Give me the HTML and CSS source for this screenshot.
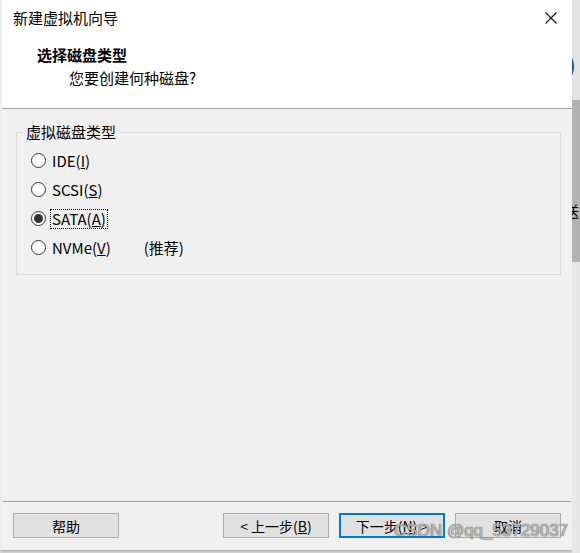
FILE: index.html
```html
<!DOCTYPE html>
<html lang="zh-CN">

<head>
    <meta charset="UTF-8">
    <meta name="viewport" content="width=device-width, initial-scale=1.0">
    <title>新建虚拟机向导</title>
    <link rel="stylesheet" href="styles.css">
</head>

<body>
    <div class="screen">
        <div class="dialog">
            <div class="titlebar">
                <span class="title">新建虚拟机向导</span>
                <svg class="close" width="12" height="12" viewBox="0 0 12 12">
                    <path d="M0.5 0.5 L11.5 11.5 M11.5 0.5 L0.5 11.5" stroke="#111" stroke-width="1.1" fill="none" />
                </svg>
            </div>

            <div class="header">
                <h1>选择磁盘类型</h1>
                <p>您要创建何种磁盘?</p>
            </div>

            <div class="content">
                <fieldset class="group">
                    <legend>虚拟磁盘类型</legend>

                    <div class="option">
                        <span class="radio"></span>
                        <span class="label">IDE(<u>I</u>)</span>
                    </div>
                    <div class="option">
                        <span class="radio"></span>
                        <span class="label">SCSI(<u>S</u>)</span>
                    </div>
                    <div class="option">
                        <span class="radio checked"></span>
                        <span class="label focus">SATA(<u>A</u>)</span>
                    </div>
                    <div class="option">
                        <span class="radio"></span>
                        <span class="label">NVMe(<u>V</u>)</span>
                        <span class="hint">(推荐)</span>
                    </div>
                </fieldset>
            </div>

            <div class="footer">
                <button class="btn">帮助</button>
                <div class="nav">
                    <button class="btn">&lt; 上一步(<u>B</u>)</button>
                    <button class="btn default">下一步(<u>N</u>) &gt;</button>
                    <button class="btn">取消</button>
                </div>
            </div>
        </div>

        <div class="side">
            <div class="side-top"><span class="paren">)</span></div>
            <div class="side-mid"><span class="frag">送</span></div>
            <div class="side-bottom"></div>
        </div>

        <div class="watermark">CSDN @qq_53729037</div>
    </div>
</body>

</html>
```

FILE: styles.css
```css
* {
    margin: 0;
    padding: 0;
    box-sizing: border-box;
}

body {
    width: 580px;
    height: 553px;
    overflow: hidden;
    background-color: #d9d9d9;
    font-family: "Noto Sans CJK SC", "Liberation Sans", sans-serif;
    color: #000;
}

.screen {
    position: relative;
    display: flex;
    height: 553px;
}

.dialog {
    width: 572px;
    height: 550px;
    display: flex;
    flex-direction: column;
    background-color: #f0f0f0;
    border-left: 2px solid #ececec;
    box-shadow: 0 1px 3px rgba(0, 0, 0, 0.25);
}

.titlebar {
    height: 36px;
    background-color: #fff;
    display: flex;
    align-items: center;
    justify-content: space-between;
    padding: 0 15px 0 11px;
}

.title {
    font-size: 15px;
    line-height: 20px;
}

.header {
    height: 73px;
    background-color: #fff;
    border-bottom: 1px solid #a0a0a0;
    padding: 9px 0 0 35px;
}

.header h1 {
    font-size: 15px;
    font-weight: bold;
    line-height: 20px;
}

.header p {
    font-size: 15px;
    line-height: 20px;
    margin: 3px 0 0 32px;
}

.content {
    flex: 1;
    padding: 14px 11px 0 14px;
}

.group {
    border: 1px solid #dcdcdc;
    height: 152px;
    padding: 5px 0 0 14px;
}

.group legend {
    font-size: 15px;
    line-height: 18px;
    margin-left: -8px;
    padding: 0 3px;
}

.option {
    display: flex;
    align-items: center;
    height: 29px;
    font-size: 15px;
}

.radio {
    width: 15px;
    height: 15px;
    border: 1px solid #333;
    border-radius: 50%;
    background-color: #fff;
    display: flex;
    align-items: center;
    justify-content: center;
    margin-right: 5px;
}

.radio.checked::after {
    content: "";
    width: 9px;
    height: 9px;
    border-radius: 50%;
    background-color: #333;
}

.label {
    line-height: 18px;
    padding: 0 1px;
}

.label.focus {
    outline: 1px dotted #000;
}

.hint {
    margin-left: 32px;
}

.footer {
    height: 49px;
    border-top: 1px solid #a0a0a0;
    margin: 0 1px 0 1px;
    display: flex;
    align-items: flex-start;
    padding: 11px 10px 0 10px;
}

.nav {
    margin-left: auto;
    display: flex;
    gap: 10px;
}

.btn {
    width: 106px;
    height: 25px;
    background-color: #e1e1e1;
    border: 1px solid #adadad;
    font-family: "Noto Sans CJK SC", "Liberation Sans", sans-serif;
    font-size: 14px;
    color: #000;
}

.btn.default {
    border: 2px solid #0078d7;
}

.side {
    width: 8px;
    display: flex;
    flex-direction: column;
}

.side-top {
    height: 100px;
    background-color: #e3e3e3;
    overflow: hidden;
    position: relative;
}

.paren {
    position: absolute;
    left: -4px;
    top: 50px;
    font-size: 20px;
    font-weight: bold;
    color: #2a4a8c;
}

.side-mid {
    height: 162px;
    background-color: #b2b2b2;
    overflow: hidden;
    position: relative;
}

.frag {
    position: absolute;
    left: -8px;
    top: 100px;
    font-size: 15px;
    color: #000;
}

.side-bottom {
    flex: 1;
    background-color: #e6e6e6;
}

.watermark {
    position: absolute;
    left: 394px;
    top: 521px;
    font-family: "Liberation Sans", sans-serif;
    font-size: 17px;
    color: rgba(215, 215, 215, 0.75);
    text-shadow: 0 0 1px rgba(90, 90, 90, 0.9), 0 0 1px rgba(90, 90, 90, 0.9);
    white-space: nowrap;
}
```
